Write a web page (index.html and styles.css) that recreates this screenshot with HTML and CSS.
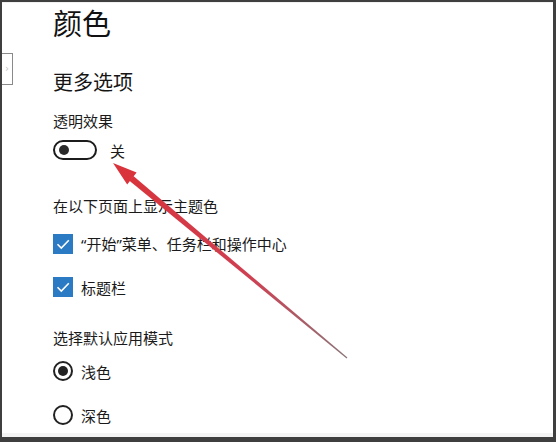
FILE: index.html
```html
<!DOCTYPE html>
<html lang="zh-CN">
<head>
<meta charset="utf-8">
<title>颜色</title>
<link rel="stylesheet" href="styles.css">
</head>
<body>
<div class="frame">
  <div class="side-tab">›</div>
  <div class="content">
    <h1 class="title">颜色</h1>
    <h2 class="subtitle">更多选项</h2>
    <div class="label label-first">透明效果</div>
    <div class="toggle-row">
      <span class="toggle"><span class="knob"></span></span>
      <span class="toggle-text">关</span>
    </div>
    <div class="label label-accent">在以下页面上显示主题色</div>
    <div class="check-list">
      <div class="option">
        <span class="checkbox">
          <svg width="20" height="20" viewBox="0 0 20 20"><path d="M4.5 10.2 L8.3 14 L15.8 6.3" fill="none" stroke="#fff" stroke-width="1.6"/></svg>
        </span>
        <span class="option-text latin-quotes">“开始”菜单、任务栏和操作中心</span>
      </div>
      <div class="option">
        <span class="checkbox">
          <svg width="20" height="20" viewBox="0 0 20 20"><path d="M4.5 10.2 L8.3 14 L15.8 6.3" fill="none" stroke="#fff" stroke-width="1.6"/></svg>
        </span>
        <span class="option-text">标题栏</span>
      </div>
    </div>
    <div class="label label-mode">选择默认应用模式</div>
    <div class="radio-list">
      <div class="option">
        <span class="radio checked"><span class="dot"></span></span>
        <span class="option-text">浅色</span>
      </div>
      <div class="option">
        <span class="radio"></span>
        <span class="option-text">深色</span>
      </div>
    </div>
  </div>
  <svg class="arrow" width="556" height="442" viewBox="0 0 556 442">
    <defs>
      <linearGradient id="shaft" gradientUnits="userSpaceOnUse" x1="131" y1="178" x2="347" y2="358">
        <stop offset="0" stop-color="#d8343c"/>
        <stop offset="0.55" stop-color="#cf4052"/>
        <stop offset="1" stop-color="#8a7478"/>
      </linearGradient>
    </defs>
    <polygon points="129.4,180.8 133.4,176.0 347.4,357.6 346.6,358.4" fill="url(#shaft)"/>
    <polygon points="113,163 136.6,172.4 127.2,184.6" fill="#d9333b"/>
  </svg>
</div>
</body>
</html>
```

FILE: styles.css
```css
html, body {
  margin: 0;
  padding: 0;
  background: #ffffff;
}

body {
  font-family: "Noto Sans CJK SC", "Noto Sans", sans-serif;
  color: #1b1b1b;
}

.frame {
  position: relative;
  width: 556px;
  height: 442px;
  box-sizing: border-box;
  border-style: solid;
  border-color: #3f3f3f;
  border-width: 2px 3px 5px 2px;
  background: #ffffff;
  overflow: hidden;
}

.content {
  height: 100%;
  box-sizing: border-box;
  padding: 5px 0 0 51px;
  border-top: 1px solid #f1f1f1;
  border-bottom: 4px solid #f4f4f4;
}

.side-tab {
  position: absolute;
  left: 0;
  top: 51px;
  width: 10px;
  height: 30px;
  border: 1px solid #8a8a8a;
  border-left: none;
  font-size: 10px;
  line-height: 30px;
  color: #c4c4c4;
  text-align: center;
  font-family: "DejaVu Sans", sans-serif;
}

.title {
  margin: 0;
  font-size: 29px;
  line-height: 29px;
  font-weight: normal;
  color: #111;
}

.subtitle {
  margin: 35px 0 0;
  font-size: 20px;
  line-height: 20px;
  font-weight: normal;
  color: #151515;
}

.label {
  font-size: 15px;
  line-height: 15px;
  color: #1a1a1a;
}

.label-first { margin-top: 21px; }
.label-accent { margin-top: 38px; }
.label-mode { margin-top: 33px; }

.toggle-row {
  margin-top: 12px;
  display: flex;
  align-items: center;
  height: 20px;
}

.toggle {
  width: 44px;
  height: 20px;
  box-sizing: border-box;
  border: 2px solid #1c1c1c;
  border-radius: 10px;
  display: flex;
  align-items: center;
  padding-left: 4px;
}

.knob {
  width: 10px;
  height: 10px;
  border-radius: 50%;
  background: #2a2a2a;
}

.toggle-text {
  margin-left: 13px;
  font-size: 15px;
  line-height: 15px;
}

.check-list {
  margin-top: 21px;
  display: flex;
  flex-direction: column;
  gap: 23px;
}

.radio-list {
  margin-top: 16px;
  display: flex;
  flex-direction: column;
  gap: 24px;
}

.option {
  display: flex;
  align-items: center;
  height: 20px;
  gap: 8px;
}

.option-text {
  font-size: 15px;
  line-height: 15px;
  color: #1a1a1a;
}

.latin-quotes {
  font-family: "Noto Sans", "Noto Sans CJK SC", sans-serif;
}

.checkbox {
  width: 20px;
  height: 20px;
  background: #2b7bc4;
  display: block;
}

.checkbox svg {
  display: block;
}

.radio {
  width: 20px;
  height: 20px;
  box-sizing: border-box;
  border: 2px solid #222;
  border-radius: 50%;
  display: flex;
  align-items: center;
  justify-content: center;
}

.radio .dot {
  width: 10px;
  height: 10px;
  border-radius: 50%;
  background: #222;
}

.arrow {
  position: absolute;
  left: -2px;
  top: -2px;
  pointer-events: none;
}
```
